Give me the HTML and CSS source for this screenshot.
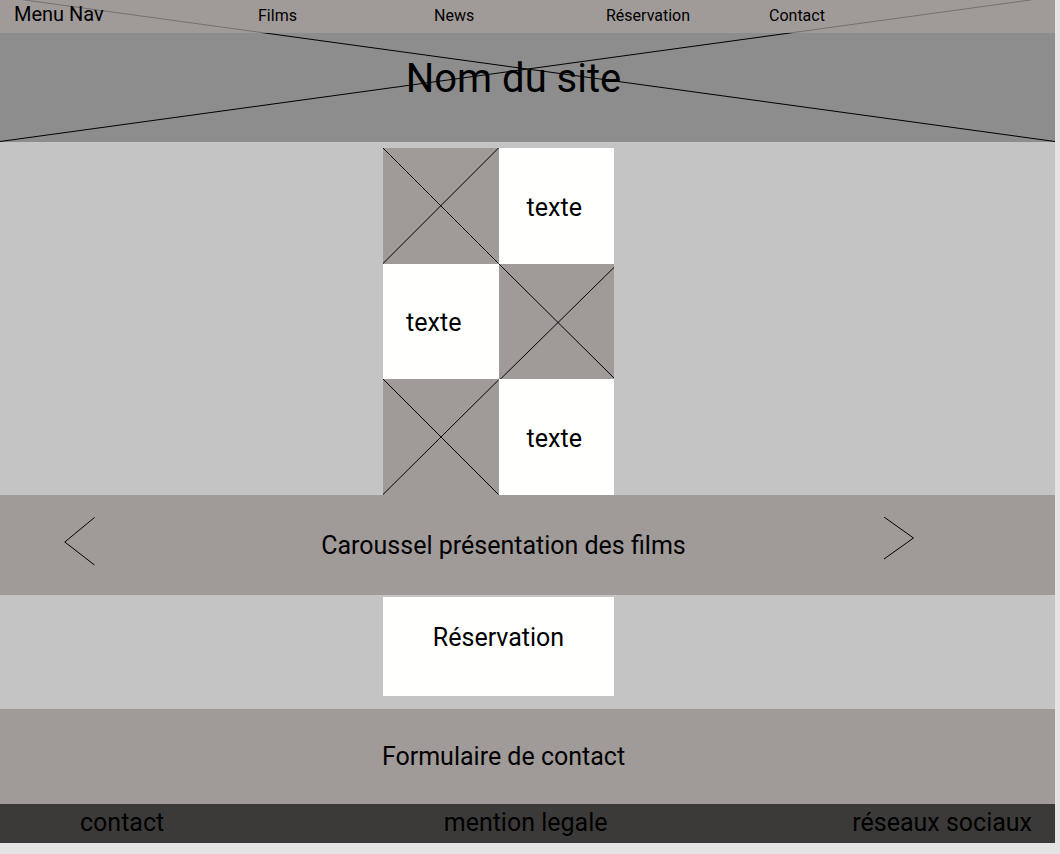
FILE: index.html
```html
<!DOCTYPE html>
<html lang="fr">
<head>
<meta charset="utf-8">
<title>Nom du site</title>
<link rel="stylesheet" href="styles.css">
</head>
<body>
<div class="page">
  <header class="hero">
    <svg class="hero-cross" viewBox="0 0 1055 142" preserveAspectRatio="none" aria-hidden="true">
      <path d="M0 -3.400L1055 141.500M0 141.500L1055 -3.400"/>
    </svg>
    <nav class="nav" aria-label="Menu Nav">
      <span class="nav-title">Menu Nav</span>
      <a href="#films">Films</a>
      <a href="#news">News</a>
      <a href="#reservation">Réservation</a>
      <a href="#contact">Contact</a>
    </nav>
    <h1 class="site-name">Nom du site</h1>
  </header>
  <main>
    <section class="news" id="news">
      <div class="tiles">
        <svg class="tile-image" viewBox="0 0 116 116" preserveAspectRatio="none" aria-hidden="true"><path d="M0 0L116 116M0 116L116 0"/></svg>
        <p class="tile-text">texte</p>
        <p class="tile-text tile-text-left">texte</p>
        <svg class="tile-image" viewBox="0 0 116 116" preserveAspectRatio="none" aria-hidden="true"><path d="M0 0L116 115M0 117L116 3"/></svg>
        <svg class="tile-image" viewBox="0 0 116 116" preserveAspectRatio="none" aria-hidden="true"><path d="M0 0L116 116M0 116L116 1"/></svg>
        <p class="tile-text">texte</p>
      </div>
    </section>
    <section class="carousel" id="films">
      <button class="arrow" type="button" aria-label="Précédent">
        <svg width="32" height="50" viewBox="0 0 32 50"><path d="M30.500 .5L.8 25L30.500 48"/></svg>
      </button>
      <h2 class="carousel-title">Caroussel présentation des films</h2>
      <button class="arrow" type="button" aria-label="Suivant">
        <svg width="32" height="44" viewBox="0 0 32 44"><path d="M1 0L30.500 21L1 42"/></svg>
      </button>
    </section>
    <section class="booking" id="reservation">
      <h2 class="booking-card">Réservation</h2>
    </section>
    <section class="contact" id="contact">
      <h2>Formulaire de contact</h2>
    </section>
  </main>
  <footer class="footer">
    <a href="#contact">contact</a>
    <a href="#mentions">mention legale</a>
    <a href="#reseaux">réseaux sociaux</a>
  </footer>
</div>
</body>
</html>
```

FILE: styles.css
```css
* {
  box-sizing: border-box;
}

body {
  margin: 0;
  background: #e4e4e4;
  color: #000;
  font-family: Roboto, "Liberation Sans", sans-serif;
  font-size: 25px;
  line-height: 32px;
}

h1,
h2,
p {
  margin: 0;
  font-size: inherit;
  font-weight: 400;
}

a {
  color: inherit;
  text-decoration: none;
}

svg {
  display: block;
}

svg path {
  fill: none;
  stroke: #000;
  stroke-width: 1;
  vector-effect: non-scaling-stroke;
}

.page {
  margin-right: 5px;
  background: #c4c4c4;
}

.hero {
  position: relative;
  background: #8d8d8d;
}

.hero-cross {
  position: absolute;
  inset: 0;
  width: 100%;
  height: 100%;
}

.nav {
  position: relative;
  display: grid;
  grid-template-columns: 244fr 176fr 172fr 163fr 286fr;
  align-items: baseline;
  height: 33px;
  padding: 2px 0 0 14px;
  background: rgba(168, 161, 158, 0.7);
  font-size: 16px;
  line-height: 24px;
}

.nav-title {
  font-size: 20px;
}

.site-name {
  position: relative;
  padding: 22px 28px 39px 0;
  font-size: 40px;
  line-height: 48px;
  text-align: center;
}

.news {
  display: flex;
  justify-content: center;
  padding: 6px 58px 0 0;
}

.tiles {
  display: grid;
  grid-template-columns: 1fr 1fr;
  grid-template-rows: 1fr 1fr 1fr;
  width: 231px;
  aspect-ratio: 2 / 3;
}

.tile-image {
  width: 100%;
  height: 100%;
  background: #a09b99;
}

.tile-text {
  display: grid;
  place-items: center;
  padding: 4px 4px 0 0;
  background: #fffffd;
}

.tile-text-left {
  padding-right: 14px;
}

.carousel {
  display: grid;
  grid-template-columns: auto 1fr auto;
  align-items: start;
  padding: 22px 140px 20px 64px;
  background: #a09b99;
}

.carousel-title {
  padding-left: 28px;
  line-height: 58px;
  text-align: center;
}

.arrow {
  padding: 0;
  border: 0;
  background: none;
  cursor: pointer;
}

.booking {
  display: flex;
  justify-content: center;
  padding: 2px 58px 13px 0;
}

.booking-card {
  width: 231px;
  padding: 25px 0 42px;
  background: #fffffd;
  text-align: center;
}

.contact {
  padding: 32px 48px 31px 0;
  background: #a09b99;
  text-align: center;
}

.footer {
  display: grid;
  grid-template-columns: 365fr 410fr auto;
  padding: 3px 23px 4px 80px;
  background: #3c3a38;
}
```
